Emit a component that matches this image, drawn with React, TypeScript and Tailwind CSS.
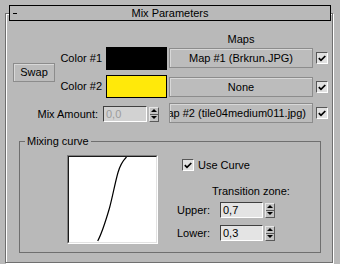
import React from "react";

const BG = "bg-[#b9b9b9]";

function Tri({ up }: { up?: boolean }) {
  return up ? (
    <div className="h-0 w-0 border-x-[3px] border-b-[3px] border-x-transparent border-b-black" />
  ) : (
    <div className="h-0 w-0 border-x-[3px] border-t-[3px] border-x-transparent border-t-black" />
  );
}

function Spinner() {
  return (
    <div className="flex h-[15px] w-[10px] flex-col border border-b-[#5a5a5a] border-l-[#e6e6e6] border-r-[#5a5a5a] border-t-[#e6e6e6] bg-[#c3c3c3]">
      <div className="flex flex-1 items-center justify-center border-b border-[#5a5a5a]">
        <Tri up />
      </div>
      <div className="flex flex-1 items-center justify-center">
        <Tri />
      </div>
    </div>
  );
}

function Check() {
  return (
    <div className="flex h-[12px] w-[12px] items-center justify-center border border-b-white border-l-[#575757] border-r-white border-t-[#575757] bg-[#e1e1e1]">
      <svg width="8" height="7" viewBox="0 0 8 7">
        <path d="M0.8 3.2 L3 5.4 L7.3 1" stroke="black" strokeWidth="1.7" fill="none" />
      </svg>
    </div>
  );
}

function Field({ value, disabled, w }: { value: string; disabled?: boolean; w: string }) {
  return (
    <div
      className={`flex h-[16px] ${w} items-center border border-b-white border-l-[#404040] border-r-white border-t-[#404040] pl-[2px] leading-[14px] ${
        disabled ? "bg-[#d2d2d2] text-[#9c9c9c]" : "bg-[#e4e4e4] text-black"
      }`}
    >
      {value}
    </div>
  );
}

function MapButton({ children, right }: { children: React.ReactNode; right?: boolean }) {
  return (
    <div
      className={`flex h-[20px] w-[144px] items-center overflow-hidden whitespace-nowrap border border-[#8c8c8c] bg-[#bcbcbc] shadow-[inset_1px_1px_0_#d8d8d8] ${
        right ? "justify-end pr-[6px]" : "justify-center"
      }`}
    >
      {children}
    </div>
  );
}

function ColorRow({ label, color }: { label: string; color: string }) {
  return (
    <div className="flex h-[23px] items-center">
      <div className="w-[42px] whitespace-nowrap text-right">{label}</div>
      <div className={`ml-[4px] h-[23px] w-[61px] border border-black ${color}`} />
    </div>
  );
}

export default function App() {
  return (
    <div
      className={`h-[264px] w-[340px] overflow-hidden ${BG} pl-[5px] pt-[13px] font-['Liberation_Sans',Arial,sans-serif] text-[11px] leading-[13px] text-black`}
    >
      <div className="h-[250px] w-[328px] border border-[#6f6f6f] shadow-[inset_1px_1px_0_#fff,1px_1px_0_#fff]">
        {/* rollout title */}
        <div className={`relative -mt-[9px] ml-[3px] flex h-[16px] w-[322px] items-center border border-black ${BG}`}>
          <div className="ml-[3px] h-px w-[4px] bg-black" />
          <div className="flex-1 pr-[7px] text-center leading-[14px]">Mix Parameters</div>
        </div>

        {/* colours and maps */}
        <div className="ml-[7px] mt-[11px] flex">
          <div className="flex w-[154px] flex-col pt-[15px]">
            <div className="flex items-center">
              <div className="flex h-[19px] w-[42px] items-center justify-center border border-[#8c8c8c] bg-[#bcbcbc] shadow-[inset_1px_1px_0_#d8d8d8]">
                Swap
              </div>
              <div className="ml-[5px] flex flex-col gap-[5px]">
                <ColorRow label="Color #1" color="bg-black" />
                <ColorRow label="Color #2" color="bg-[#ffe90a]" />
              </div>
            </div>
            <div className="mt-[8px] flex items-center">
              <div className="w-[85px] whitespace-nowrap text-right">Mix Amount:</div>
              <div className="ml-[5px]">
                <Field value="0,0" disabled w="w-[44px]" />
              </div>
              <div className="ml-[2px]">
                <Spinner />
              </div>
            </div>
          </div>

          <div className="ml-[2px] flex flex-col">
            <div className="h-[15px] w-[144px] text-center leading-[15px]">Maps</div>
            <div className="mt-px flex items-center">
              <MapButton>Map #1 (Brkrun.JPG)</MapButton>
              <div className="ml-[3px]">
                <Check />
              </div>
            </div>
            <div className="mt-[9px] flex items-center">
              <MapButton>None</MapButton>
              <div className="ml-[3px]">
                <Check />
              </div>
            </div>
            <div className="mt-[6px] flex items-center">
              <MapButton right>Map #2 (tile04medium011.jpg)</MapButton>
              <div className="ml-[3px]">
                <Check />
              </div>
            </div>
          </div>
        </div>

        {/* mixing curve group */}
        <fieldset className="ml-[13px] mt-[12px] h-[118px] w-[302px] border border-[#6f6f6f] p-0">
          <legend className="ml-[5px] px-[2px] leading-[13px]">Mixing curve</legend>
          <div className="flex">
            <div className="ml-[47px] mt-[7px] h-[89px] w-[91px] border border-b-white border-l-[#7f7f7f] border-r-white border-t-[#7f7f7f]">
              <div className="h-[87px] w-[89px] border border-b-[#e2e2e2] border-l-[#1a1a1a] border-r-[#e2e2e2] border-t-[#1a1a1a] bg-white">
                <svg width="87" height="85" viewBox="0 0 87 85">
                  <path
                    d="M28.7 84 C33 76 37 63 40.5 51 C43.5 40 46 26 49 15.5 C51 8.5 54 3.5 57.5 0"
                    stroke="black"
                    strokeWidth="1.2"
                    fill="none"
                  />
                </svg>
              </div>
            </div>

            <div className="ml-[19px] mt-[11px] flex flex-col">
              <div className="flex h-[12px] items-center pl-[5px]">
                <Check />
                <span className="ml-[4px]">Use Curve</span>
              </div>
              <div className="mt-[14px] h-[12px] whitespace-nowrap pl-[35px] leading-[12px]">Transition zone:</div>
              <div className="mt-[5px] flex h-[16px] items-center">
                <div className="w-[43px]">Upper:</div>
                <Field value="0,7" w="w-[43px]" />
                <div className="ml-[2px]">
                  <Spinner />
                </div>
              </div>
              <div className="mt-[7px] flex h-[16px] items-center">
                <div className="w-[43px]">Lower:</div>
                <Field value="0,3" w="w-[43px]" />
                <div className="ml-[2px]">
                  <Spinner />
                </div>
              </div>
            </div>
          </div>
        </fieldset>
      </div>
    </div>
  );
}
